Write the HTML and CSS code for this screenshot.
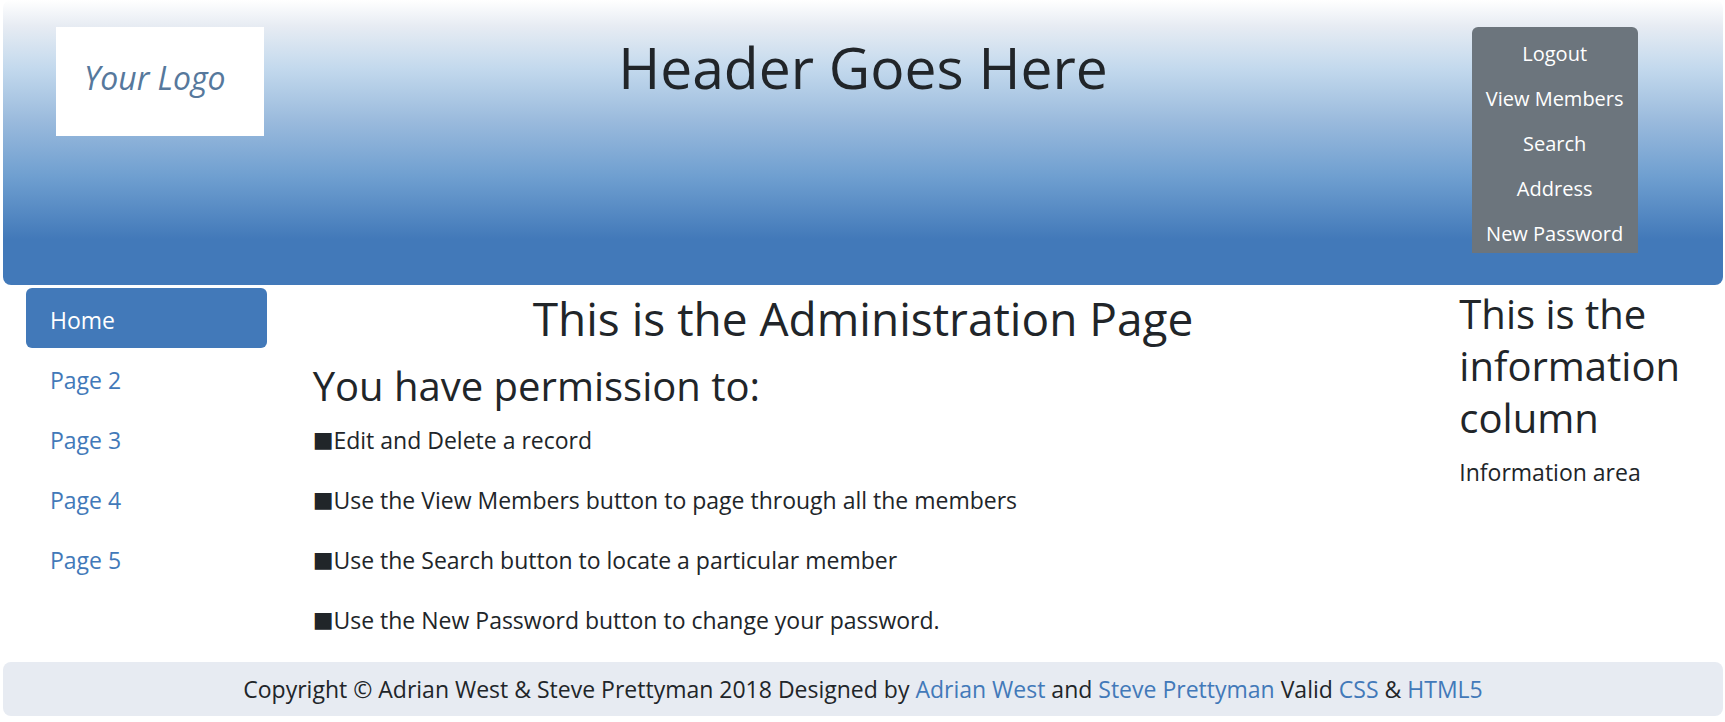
FILE: index.html
```
<!DOCTYPE html>
<html lang="en">
<head>
<meta charset="utf-8">
<meta name="viewport" content="width=device-width, initial-scale=1">
<title>Administration Page</title>
<link rel="stylesheet" href="styles.css">
</head>
<body>
<header class="banner columns">
  <div class="column"><div class="logo">Your Logo</div></div>
  <h1 class="banner-title">Header Goes Here</h1>
  <div class="column">
    <div class="actions">
      <button type="button" class="action">Logout</button>
      <button type="button" class="action">View Members</button>
      <button type="button" class="action">Search</button>
      <button type="button" class="action">Address</button>
      <button type="button" class="action">New Password</button>
    </div>
  </div>
</header>
<div class="content columns">
  <nav class="column">
    <ul class="pages">
      <li><a class="page-link active" href="#home">Home</a></li>
      <li><a class="page-link" href="#page2">Page 2</a></li>
      <li><a class="page-link" href="#page3">Page 3</a></li>
      <li><a class="page-link" href="#page4">Page 4</a></li>
      <li><a class="page-link" href="#page5">Page 5</a></li>
    </ul>
  </nav>
  <main class="column">
    <h2 class="page-title">This is the Administration Page</h2>
    <h3 class="subtitle">You have permission to:</h3>
    <p class="text"><span class="bullet">■</span>Edit and Delete a record</p>
    <p class="text"><span class="bullet">■</span>Use the View Members button to page through all the members</p>
    <p class="text"><span class="bullet">■</span>Use the Search button to locate a particular member</p>
    <p class="text"><span class="bullet">■</span>Use the New Password button to change your password.</p>
  </main>
  <aside class="column">
    <h3 class="subtitle">This is the information column</h3>
    <p class="text">Information area</p>
  </aside>
</div>
<footer class="footer">Copyright © Adrian West &amp; Steve Prettyman 2018 Designed by <a href="#west">Adrian West</a> and <a href="#prettyman">Steve Prettyman</a> Valid <a href="#css">CSS</a> &amp; <a href="#html5">HTML5</a></footer>
</body>
</html>
```
FILE: styles.css
```
* {
  box-sizing: border-box;
}

body {
  margin: 0;
  padding: 0 2px 0 3px;
  background: #fff;
  color: #212529;
  font-family: "Open Sans", "Noto Sans", sans-serif;
  font-size: 23px;
  line-height: 36px;
}

h1,
h2,
h3,
p {
  margin: 0;
  font-weight: 400;
}

a {
  color: #4279b9;
  text-decoration: none;
}

.columns {
  display: grid;
  grid-template-columns: minmax(0, 2fr) minmax(0, 8fr) minmax(0, 2fr);
}

.column {
  padding: 0 23px;
}

.banner {
  padding: 27px 30px 32px;
  border-radius: 8px;
  background: linear-gradient(#fff 0, #e7ecf3 9%, #c3d9ed 24%, #9bbbdd 42%, #6f9fd0 62%, #4279b9 84%);
}

.banner-title {
  font-size: 57px;
  line-height: 80px;
  text-align: center;
}

.logo {
  max-width: 208px;
  padding: 33px 28px 40px;
  background: #fff;
  color: #56789c;
  font-size: 32px;
  font-style: italic;
  white-space: nowrap;
}

.actions {
  display: flex;
  flex-direction: column;
  width: fit-content;
  margin: 0 auto;
  padding-bottom: 1px;
  border-radius: 6px 6px 0 0;
  background: #6c757d;
}

.action {
  padding: 9px 14px 0;
  border: 0;
  background: none;
  color: #fff;
  font: inherit;
  font-size: 20px;
  line-height: 36px;
  white-space: nowrap;
}

.content {
  padding-top: 3px;
}

.pages {
  margin: 0;
  padding: 0;
  list-style: none;
}

.page-link {
  display: block;
  padding: 14px 24px 10px;
  border-radius: 6px;
}

.page-link.active {
  background: #4279b9;
  color: #fff;
}

.page-title {
  margin-bottom: 12px;
  font-size: 46px;
  line-height: 60px;
  text-align: center;
}

.subtitle {
  margin-bottom: 10px;
  font-size: 40px;
  line-height: 52px;
}

.text {
  margin-bottom: 24px;
}

.bullet {
  font-family: "DejaVu Sans", sans-serif;
  font-size: 22px;
  line-height: 1;
  vertical-align: 2px;
}

.footer {
  padding: 9px 24px;
  border-radius: 8px;
  background: #e7ebf2;
  text-align: center;
}
```
